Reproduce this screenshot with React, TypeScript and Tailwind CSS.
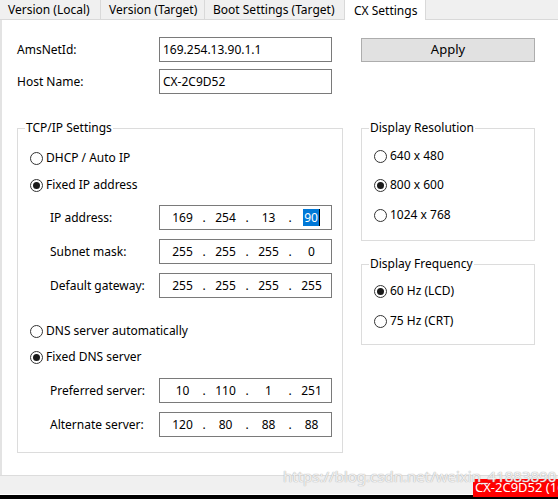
const font = { fontFamily: '"Noto Sans", "Liberation Sans", sans-serif' };

const tabs = [
  { label: 'Version (Local)', w: 'w-[101px]' },
  { label: 'Version (Target)', w: 'w-[104px]' },
  { label: 'Boot Settings (Target)', w: 'w-[140px]' },
];

function Radio({ checked, label }: { checked?: boolean; label: string }) {
  return (
    <div className="flex h-4 items-center gap-[3px]">
      <span className="flex h-[13px] w-[13px] items-center justify-center rounded-full border border-[#333333] bg-white">
        {checked && <span className="h-[7px] w-[7px] rounded-full bg-[#1a1a1a]" />}
      </span>
      <span>{label}</span>
    </div>
  );
}

function IpBox({ parts, highlightLast }: { parts: string[]; highlightLast?: boolean }) {
  return (
    <div className="flex h-[25px] w-[173px] items-center border border-[#7a7a7a] bg-white pl-[5px]">
      {parts.map((p, i) => (
        <div key={i} className="flex items-center">
          {i > 0 && <span className="w-2 text-center">.</span>}
          <span className="flex w-[35px] justify-center">
            {highlightLast && i === 3 ? (
              <span className="flex items-center">
                <span className="bg-[#0078d7] px-px leading-[17px] text-white">{p}</span>
                <span className="h-[17px] w-px bg-black" />
              </span>
            ) : (
              p
            )}
          </span>
        </div>
      ))}
    </div>
  );
}

function IpRow({ label, parts, mt, highlightLast }: { label: string; parts: string[]; mt: string; highlightLast?: boolean }) {
  return (
    <div className={`flex items-center ${mt}`}>
      <span className="w-[129px] pl-5">{label}</span>
      <IpBox parts={parts} highlightLast={highlightLast} />
    </div>
  );
}

function TextRow({ label, value, mt }: { label: string; value: string; mt?: string }) {
  return (
    <div className={`flex items-center ${mt ?? ''}`}>
      <span className="w-[142px]">{label}</span>
      <div className="flex h-[25px] w-[173px] items-center border border-[#7a7a7a] bg-white px-[3px]">{value}</div>
    </div>
  );
}

function Group({ title, className, children }: { title: string; className: string; children: React.ReactNode }) {
  return (
    <fieldset className={`border border-[#dcdcdc] ${className}`}>
      <legend className="ml-[7px] px-px leading-4">{title}</legend>
      <div className="pl-3">{children}</div>
    </fieldset>
  );
}

export default function App() {
  return (
    <div className="relative flex h-[499px] w-[558px] flex-col overflow-hidden bg-black text-[12px] text-black" style={font}>
      {/* tab strip */}
      <div className="flex h-5 bg-[#f0f0f0]">
        {tabs.map((t) => (
          <div key={t.label} className={`flex h-5 items-center border-r border-b border-[#d9d9d9] pl-2 ${t.w}`}>
            {t.label}
          </div>
        ))}
        <div className="flex h-[21px] w-[81px] items-center border-r border-[#d9d9d9] bg-white pl-[9px]">CX Settings</div>
        <div className="h-5 flex-1 border-b border-[#d9d9d9]" />
      </div>

      {/* main panel */}
      <div className="flex h-[455px] gap-[18px] border-l-2 border-[#e3e3e3] bg-white pl-[15px] pt-[17px]">
        <div className="flex w-[326px] flex-col">
          <TextRow label="AmsNetId:" value="169.254.13.90.1.1" />
          <TextRow label="Host Name:" value="CX-2C9D52" mt="mt-[7px]" />

          <Group title="TCP/IP Settings" className="mt-[26px] pb-[15px]">
            <div className="mt-[14px]">
              <Radio label="DHCP / Auto IP" />
            </div>
            <div className="mt-[11px]">
              <Radio checked label="Fixed IP address" />
            </div>
            <IpRow label="IP address:" parts={['169', '254', '13', '90']} mt="mt-3" highlightLast />
            <IpRow label="Subnet mask:" parts={['255', '255', '255', '0']} mt="mt-[9px]" />
            <IpRow label="Default gateway:" parts={['255', '255', '255', '255']} mt="mt-[9px]" />
            <div className="mt-[25px]">
              <Radio label="DNS server automatically" />
            </div>
            <div className="mt-[10px]">
              <Radio checked label="Fixed DNS server" />
            </div>
            <IpRow label="Preferred server:" parts={['10', '110', '1', '251']} mt="mt-[13px]" />
            <IpRow label="Alternate server:" parts={['120', '80', '88', '88']} mt="mt-[9px]" />
          </Group>
        </div>

        <div className="flex w-[174px] flex-col">
          <button className="mt-px flex h-[24px] items-center justify-center border border-[#adadad] bg-[#e1e1e1] text-[13px]">
            Apply
          </button>

          <Group title="Display Resolution" className="mt-[58px] pb-[17px]">
            <div className="mt-3">
              <Radio label="640 x 480" />
            </div>
            <div className="mt-[13px]">
              <Radio checked label="800 x 600" />
            </div>
            <div className="mt-[14px]">
              <Radio label="1024 x 768" />
            </div>
          </Group>

          <Group title="Display Frequency" className="mt-[15px] pb-[15px]">
            <div className="mt-[11px]">
              <Radio checked label="60 Hz (LCD)" />
            </div>
            <div className="mt-[14px]">
              <Radio label="75 Hz (CRT)" />
            </div>
          </Group>
        </div>
      </div>

      {/* bottom strip */}
      <div className="h-[19px] border-t border-[#dcdcdc] bg-[#f0f0f0]" />
      <div className="h-px bg-white" />

      {/* red host label */}
      <div className="absolute left-[473px] top-[479px] flex h-[18px] w-[90px] items-center overflow-hidden whitespace-nowrap bg-[#ff0000] pl-[2px] text-[13px] text-white">
        CX-2C9D52 (169
      </div>

      {/* watermark */}
      <div
        className="absolute left-[283px] top-[465px] whitespace-nowrap text-[15px] text-white/80"
        style={{ textShadow: '0 0 1px #b0b0b0, 0 0 1px #b0b0b0' }}
      >
        https://blog.csdn.net/weixin_41883890
      </div>
    </div>
  );
}
